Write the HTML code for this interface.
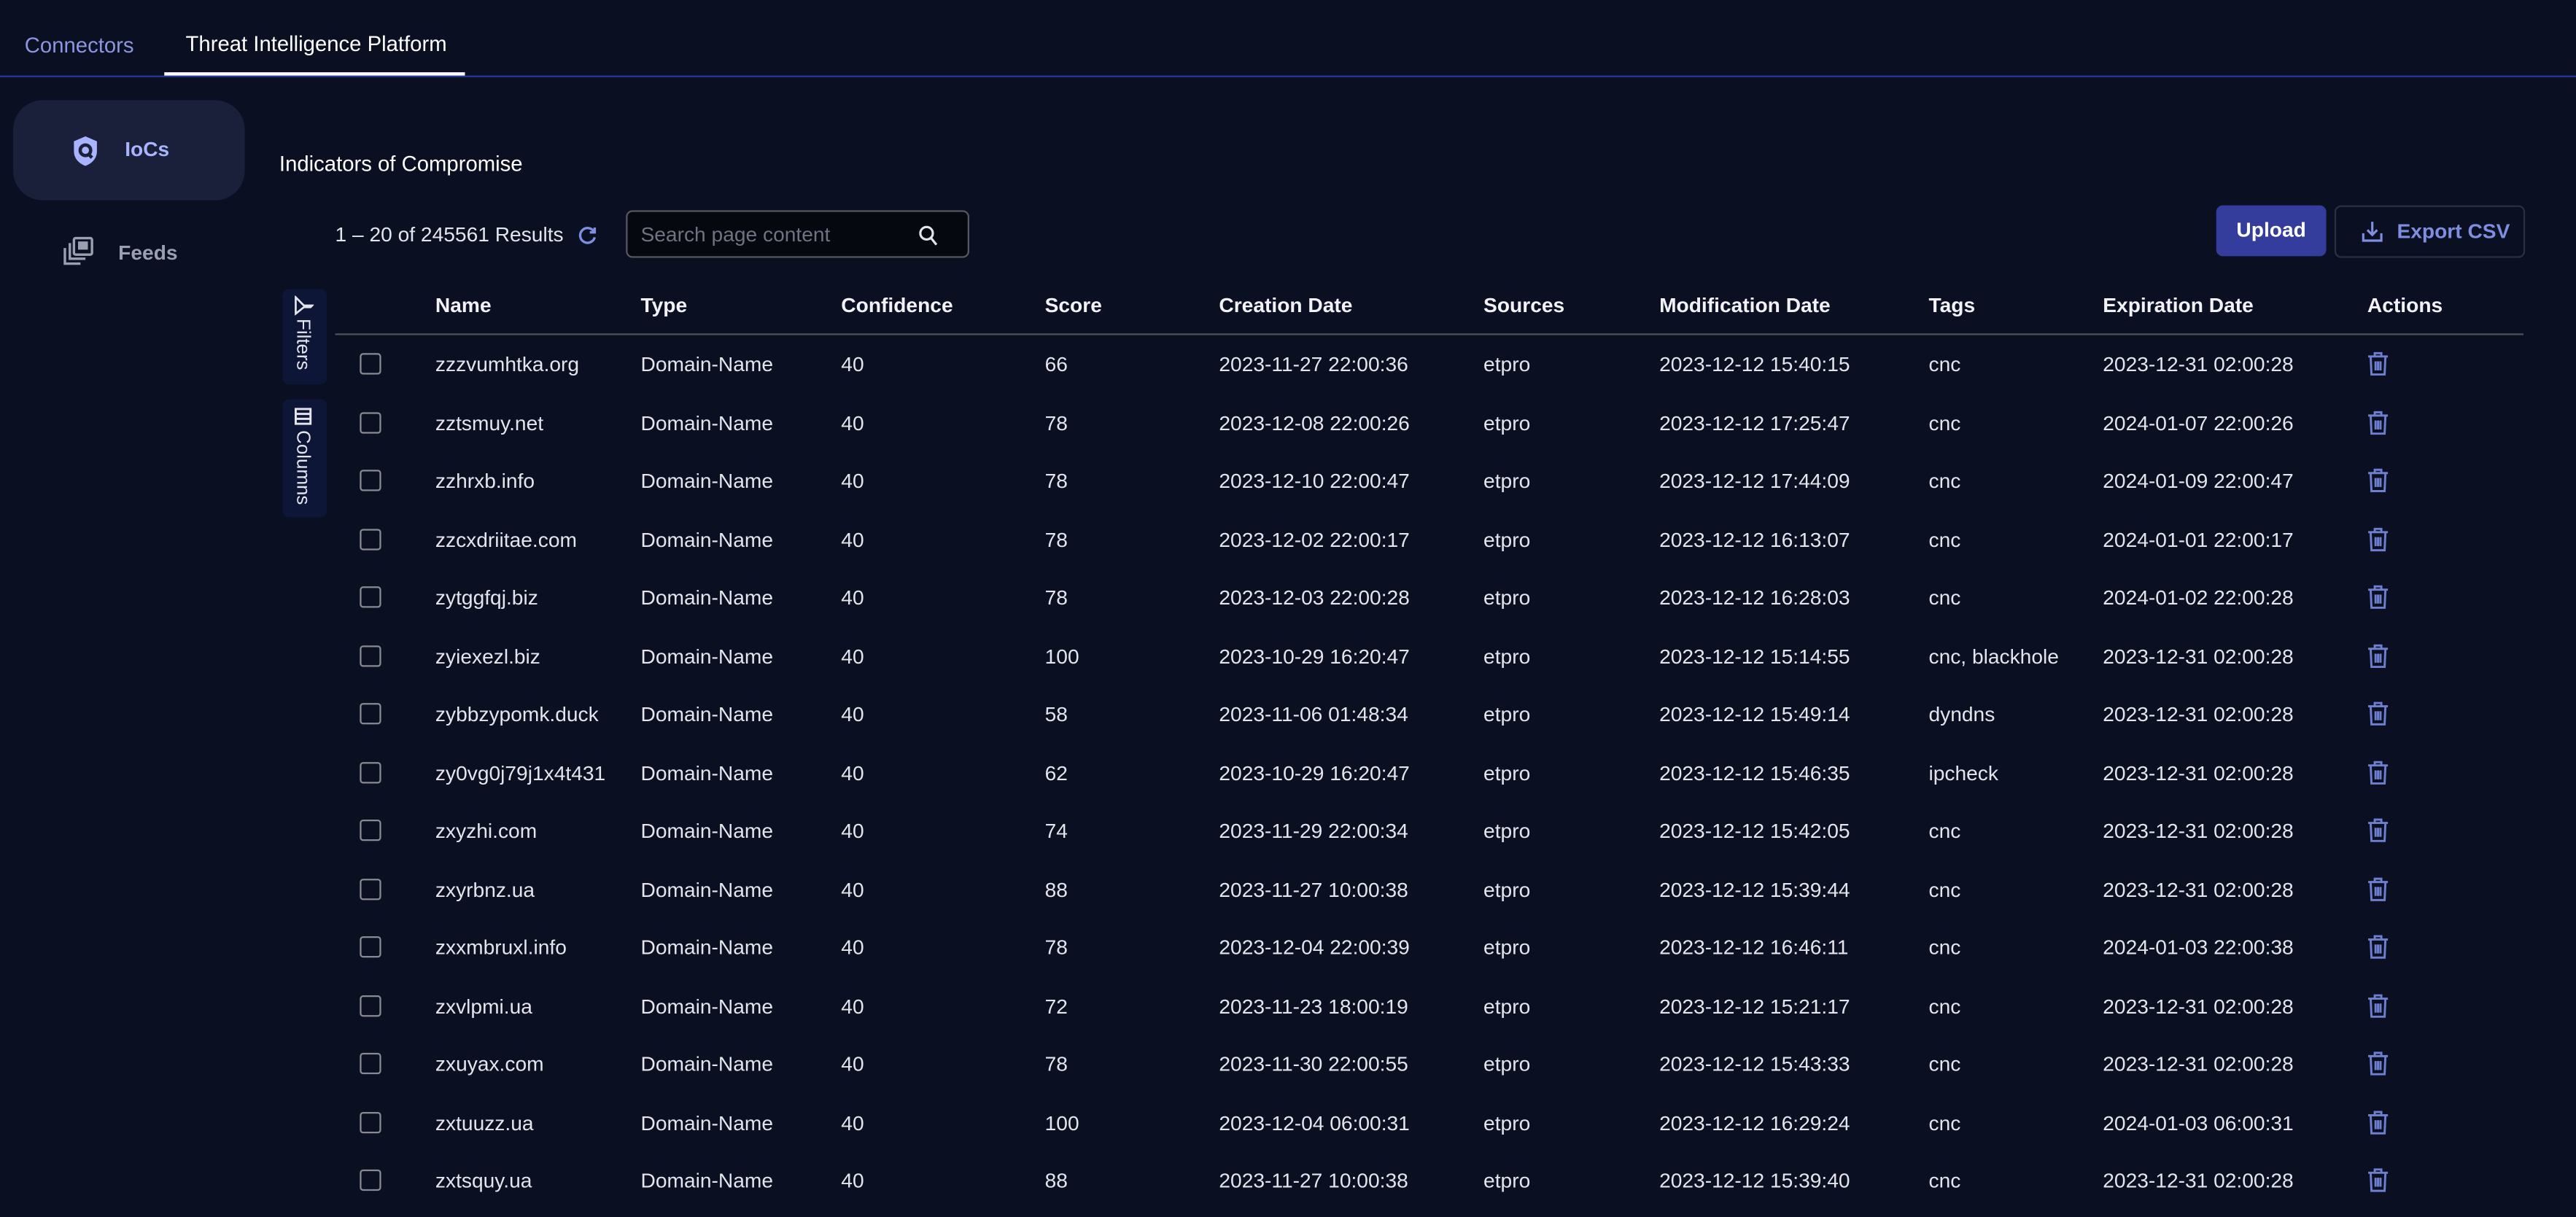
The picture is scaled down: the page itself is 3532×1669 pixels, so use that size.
<!DOCTYPE html>
<html><head><meta charset="utf-8"><style>
html,body{margin:0;padding:0;background:#0a0f22;overflow:hidden}
body{width:3532px;height:1668px}
#w{position:absolute;left:0;top:0;width:1568px;height:741px;transform:scale(2.25255);transform-origin:0 0;font-family:"Liberation Sans",sans-serif;color:#e4e4ec}
.a{position:absolute;white-space:nowrap}
.row{position:absolute;left:0;width:1568px;height:20px;font-size:12.5px}
.row span{position:absolute;top:0;line-height:20px}
.cb{position:absolute;left:219px;top:3px;width:11px;height:11px;border:1.5px solid #8a8a92;border-radius:2px}
.hd span{font-weight:bold;color:#f2f2f6}
</style></head><body><div id="w">
<div class="a" style="left:15px;top:20px;font-size:13px;color:#8c96e0">Connectors</div>
<div class="a" style="left:113px;top:19px;font-size:13px;color:#fff">Threat Intelligence Platform</div>
<div class="a" style="left:0;top:46px;width:1568px;height:1px;background:#1e3a9a"></div>
<div class="a" style="left:100px;top:44px;width:183px;height:2px;background:#fff"></div>

<div class="a" style="left:8px;top:61px;width:141px;height:61px;background:#1a1f3a;border-radius:18px"></div>
<svg class="a" style="left:43px;top:82px" width="18" height="20" viewBox="0 0 18 20"><path d="M9 1 L16 4 V10 C16 14.5 13 17.5 9 19 C5 17.5 2 14.5 2 10 V4 Z" fill="#a8b4ff"/><circle cx="9" cy="9.5" r="3.2" fill="none" stroke="#1a1f3a" stroke-width="2"/><path d="M11 12 L13 14" stroke="#1a1f3a" stroke-width="2"/></svg>
<div class="a" style="left:76px;top:84px;font-size:12.5px;font-weight:bold;color:#a8b4ff">IoCs</div>
<svg class="a" style="left:38px;top:144px" width="20" height="18" viewBox="0 0 20 18" fill="none" stroke="#9aa0b0" stroke-width="1.5"><rect x="7" y="1" width="11" height="10" rx="1"/><rect x="9.5" y="3" width="6" height="5" fill="#9aa0b0" stroke="none"/><path d="M4.5 4 V13.5 H14"/><path d="M1.5 7 V16.5 H11"/></svg>
<div class="a" style="left:72px;top:147px;font-size:12.5px;font-weight:bold;color:#9aa0b0">Feeds</div>

<div class="a" style="left:170px;top:92px;font-size:13px;color:#fff">Indicators of Compromise</div>
<div class="a" style="left:204px;top:136px;font-size:12.5px;color:#e4e4ec">1 – 20 of 245561 Results</div>
<svg class="a" style="left:351px;top:137px" width="13" height="13" viewBox="0 0 13 13" fill="none" stroke="#7f8ee0" stroke-width="1.5"><path d="M10.5 4 A4.5 4.5 0 1 0 11 7.5"/><path d="M11 1.5 V4.5 H8"/></svg>
<div class="a" style="left:381px;top:128px;width:207px;height:27px;border:1px solid #55585f;border-radius:4px;background:#05080f"></div>
<div class="a" style="left:390px;top:136px;font-size:12.5px;color:#6f7280">Search page content</div>
<svg class="a" style="left:559px;top:137px" width="12" height="13" viewBox="0 0 12 13" fill="none" stroke="#e4e4ec" stroke-width="1.4"><circle cx="5" cy="5" r="3.8"/><path d="M7.8 8 L11 12"/></svg>

<div class="a" style="left:1349px;top:125px;width:67px;height:31px;background:#343c9c;border-radius:4px;color:#fff;font-size:12.5px;font-weight:bold;text-align:center;line-height:31px">Upload</div>
<div class="a" style="left:1421px;top:125px;width:114px;height:30px;border:1px solid #2a2f42;border-radius:4px"></div>
<svg class="a" style="left:1437px;top:134px" width="14" height="14" viewBox="0 0 14 14" fill="none" stroke="#7f8ee0" stroke-width="1.4"><path d="M7 1 V9 M4 6 L7 9 L10 6"/><path d="M1.5 8 V12.5 H12.5 V8"/></svg>
<div class="a" style="left:1459px;top:134px;font-size:12.5px;font-weight:bold;color:#7f8ee0">Export CSV</div>

<div class="a" style="left:172px;top:176px;width:27px;height:58px;background:#0d1636;border-radius:4px"></div>
<div class="a" style="left:172px;top:243px;width:27px;height:72px;background:#0d1636;border-radius:4px"></div>
<svg class="a" style="left:179px;top:180px" width="12" height="12" viewBox="0 0 12 12" fill="none" stroke="#e4e4ec" stroke-width="1.2"><path d="M1 1 H11 L6 6 V11 L5 10 V6 Z" transform="rotate(-90 6 6)"/></svg>
<div class="a" style="left:178px;top:194px;font-size:11.5px;color:#e4e4ec;writing-mode:vertical-rl">Filters</div>
<svg class="a" style="left:179px;top:248px" width="11" height="11" viewBox="0 0 11 11" fill="none" stroke="#e4e4ec" stroke-width="1.3"><rect x="1" y="1" width="9" height="9"/><path d="M1 4 H10 M1 7 H10"/></svg>
<div class="a" style="left:178px;top:262px;font-size:11.5px;color:#e4e4ec;writing-mode:vertical-rl">Columns</div>

<div class="row hd" style="top:176px"><span style="left:265px">Name</span><span style="left:390px">Type</span><span style="left:512px">Confidence</span><span style="left:636px">Score</span><span style="left:742px">Creation Date</span><span style="left:903px">Sources</span><span style="left:1010px">Modification Date</span><span style="left:1174px">Tags</span><span style="left:1280px">Expiration Date</span><span style="left:1441px">Actions</span></div>
<div class="a" style="left:204px;top:203px;width:1332px;height:1px;background:#505258"></div>
<div id="rows"></div>
</div>
<script>
var d=[["zzzvumhtka.org",66,"2023-11-27 22:00:36","2023-12-12 15:40:15","cnc","2023-12-31 02:00:28"],
["zztsmuy.net",78,"2023-12-08 22:00:26","2023-12-12 17:25:47","cnc","2024-01-07 22:00:26"],
["zzhrxb.info",78,"2023-12-10 22:00:47","2023-12-12 17:44:09","cnc","2024-01-09 22:00:47"],
["zzcxdriitae.com",78,"2023-12-02 22:00:17","2023-12-12 16:13:07","cnc","2024-01-01 22:00:17"],
["zytggfqj.biz",78,"2023-12-03 22:00:28","2023-12-12 16:28:03","cnc","2024-01-02 22:00:28"],
["zyiexezl.biz",100,"2023-10-29 16:20:47","2023-12-12 15:14:55","cnc, blackhole","2023-12-31 02:00:28"],
["zybbzypomk.duck",58,"2023-11-06 01:48:34","2023-12-12 15:49:14","dyndns","2023-12-31 02:00:28"],
["zy0vg0j79j1x4t431",62,"2023-10-29 16:20:47","2023-12-12 15:46:35","ipcheck","2023-12-31 02:00:28"],
["zxyzhi.com",74,"2023-11-29 22:00:34","2023-12-12 15:42:05","cnc","2023-12-31 02:00:28"],
["zxyrbnz.ua",88,"2023-11-27 10:00:38","2023-12-12 15:39:44","cnc","2023-12-31 02:00:28"],
["zxxmbruxl.info",78,"2023-12-04 22:00:39","2023-12-12 16:46:11","cnc","2024-01-03 22:00:38"],
["zxvlpmi.ua",72,"2023-11-23 18:00:19","2023-12-12 15:21:17","cnc","2023-12-31 02:00:28"],
["zxuyax.com",78,"2023-11-30 22:00:55","2023-12-12 15:43:33","cnc","2023-12-31 02:00:28"],
["zxtuuzz.ua",100,"2023-12-04 06:00:31","2023-12-12 16:29:24","cnc","2024-01-03 06:00:31"],
["zxtsquy.ua",88,"2023-11-27 10:00:38","2023-12-12 15:39:40","cnc","2023-12-31 02:00:28"]];
var h="";d.forEach(function(r,i){var t=212+i*35.5;
h+='<div class="row" style="top:'+t+'px"><div class="cb"></div><span style="left:265px">'+r[0]+'</span><span style="left:390px">Domain-Name</span><span style="left:512px">40</span><span style="left:636px">'+r[1]+'</span><span style="left:742px">'+r[2]+'</span><span style="left:903px">etpro</span><span style="left:1010px">'+r[3]+'</span><span style="left:1174px">'+r[4]+'</span><span style="left:1280px">'+r[5]+'</span><svg style="position:absolute;left:1441px;top:2px" width="13" height="15" viewBox="0 0 13 15" fill="none" stroke="#6f7fd0" stroke-width="1.3"><path d="M0.5 3 H12.5 M4.5 3 V1 H8.5 V3 M2 3 L2.5 14 H10.5 L11 3 M5 6 V11.5 M6.5 6 V11.5 M8 6 V11.5"/></svg></div>';});
document.getElementById("rows").innerHTML=h;
</script>
</body></html>
